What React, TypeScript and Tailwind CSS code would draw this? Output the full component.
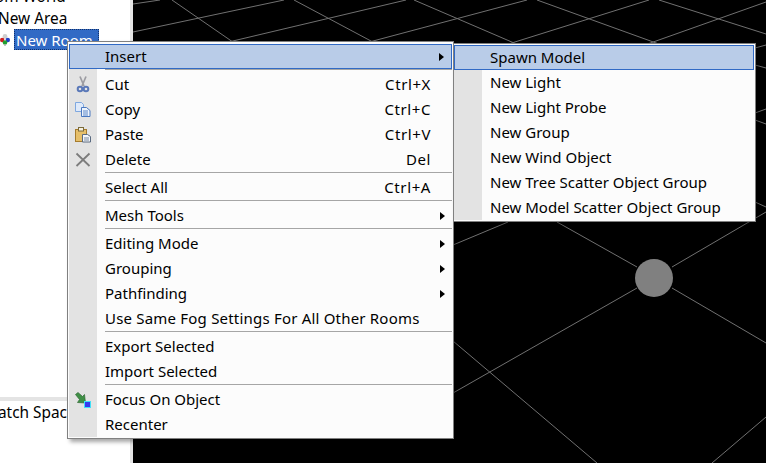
import type { ReactNode } from 'react'

const FONT = 'font-["Noto_Sans",sans-serif]'

type Row = { label: string; key?: string; arrow?: boolean; icon?: ReactNode; hot?: boolean; wide?: boolean } | 'sep'

function CutIcon() {
  return (
    <svg width="16" height="17" viewBox="0 0 16 17">
      <path d="M5 0.5 L9 10 M11 0.5 L7 10" stroke="#9c9ca2" strokeWidth="1.7" fill="none" />
      <circle cx="5" cy="13" r="2.3" fill="none" stroke="#5a78b8" strokeWidth="2" />
      <circle cx="11" cy="13" r="2.3" fill="none" stroke="#5a78b8" strokeWidth="2" />
    </svg>
  )
}

function CopyIcon() {
  return (
    <svg width="16" height="16" viewBox="0 0 16 16">
      <path d="M0.5 0.5h6l2 2v7h-8z" fill="#dfeafa" stroke="#7fa8e0" />
      <path d="M6.5 5.5h5l3.5 3v6h-8.5z" fill="#eef4fc" stroke="#4a78c0" />
      <path d="M8 9h5M8 11h5M8 13h5" stroke="#5a86c8" />
    </svg>
  )
}

function PasteIcon() {
  return (
    <svg width="16" height="16" viewBox="0 0 16 16">
      <rect x="0.5" y="2.5" width="11" height="12" fill="#e6bf6a" stroke="#a67c2e" />
      <rect x="3.5" y="0.5" width="5" height="3.5" fill="#f4efe0" stroke="#7a6a3a" />
      <path d="M7.5 7.5h5l3 2v5.5h-8z" fill="#f4f6fa" stroke="#5a6a80" />
      <path d="M9 11h5M9 13h5" stroke="#7a8aa0" />
    </svg>
  )
}

function DeleteIcon() {
  return (
    <svg width="16" height="16" viewBox="0 0 16 16">
      <path d="M1.5 1.5 L14.5 14 M14.5 1.5 L1.5 14" stroke="#7c7c7c" strokeWidth="1.8" fill="none" />
    </svg>
  )
}

function FocusIcon() {
  return (
    <svg width="16" height="16" viewBox="0 0 16 16">
      <path d="M0.5 2.5 L3 0.5 L7.5 4.5 L9.5 2.5 L10.5 11 L2.5 10.5 L4.5 7.5 Z" fill="#3f8f46" stroke="#2f6a34" strokeWidth="0.7" />
      <rect x="9.5" y="9.5" width="6" height="6" fill="#3838f0" stroke="#40e0f8" />
    </svg>
  )
}

function RoomIcon() {
  return (
    <svg width="10" height="12" viewBox="0 0 10 12">
      <circle cx="5" cy="2.5" r="2.4" fill="#cfcfcf" />
      <circle cx="2.2" cy="6" r="2.2" fill="#d02020" />
      <circle cx="7.8" cy="6" r="2.2" fill="#2040c8" />
      <circle cx="5" cy="8.5" r="2.3" fill="#20a030" />
      <circle cx="5" cy="11" r="1" fill="#b0b0b0" />
    </svg>
  )
}

const mainRows: Row[] = [
  { label: 'Insert', arrow: true, hot: true },
  'sep',
  { label: 'Cut', key: 'Ctrl+X', icon: <CutIcon /> },
  { label: 'Copy', key: 'Ctrl+C', icon: <CopyIcon /> },
  { label: 'Paste', key: 'Ctrl+V', icon: <PasteIcon /> },
  { label: 'Delete', key: 'Del', icon: <DeleteIcon /> },
  'sep',
  { label: 'Select All', key: 'Ctrl+A' },
  'sep',
  { label: 'Mesh Tools', arrow: true },
  'sep',
  { label: 'Editing Mode', arrow: true },
  { label: 'Grouping', arrow: true },
  { label: 'Pathfinding', arrow: true },
  { label: 'Use Same Fog Settings For All Other Rooms', wide: true },
  'sep',
  { label: 'Export Selected' },
  { label: 'Import Selected' },
  'sep',
  { label: 'Focus On Object', icon: <FocusIcon /> },
  { label: 'Recenter' },
]

const subRows: Row[] = [
  { label: 'Spawn Model', hot: true },
  { label: 'New Light' },
  { label: 'New Light Probe' },
  { label: 'New Group' },
  { label: 'New Wind Object' },
  { label: 'New Tree Scatter Object Group' },
  { label: 'New Model Scatter Object Group' },
]

function MenuRows({ rows }: { rows: Row[] }) {
  return (
    <>
      {rows.map((row, i) =>
        row === 'sep' ? (
          <div key={i} className="flex h-[3px]">
            <div className="w-[28px] bg-[#e3e3e3]" />
            <div className="flex-1 pl-[8px]">
              <div className="h-px bg-[#a6a6a6]" />
            </div>
          </div>
        ) : (
          <div
            key={i}
            className={`flex h-[25px] items-center ${row.hot ? 'border border-[#316ac5] bg-[#b9cce8]' : ''}`}
          >
            <div
              className={`flex h-full w-[28px] shrink-0 items-center justify-center ${row.hot ? '-ml-px' : 'bg-[#e3e3e3]'}`}
            >
              {row.icon}
            </div>
            <span className={`-mt-[2px] ml-[8px] whitespace-nowrap ${row.wide ? 'tracking-[0.2px]' : ''}`}>{row.label}</span>
            <span className="-mt-[2px] ml-auto tracking-[0.6px]">{row.key}</span>
            <div className="flex w-[21px] shrink-0 justify-center">
              {row.arrow && <div className="ml-[2px] h-0 w-0 border-y-[4px] border-l-[5px] border-y-transparent border-l-black" />}
            </div>
          </div>
        ),
      )}
    </>
  )
}

export default function App() {
  return (
    <div className={`relative flex h-[463px] w-[766px] overflow-hidden bg-white text-[15px] leading-[22px] text-black ${FONT}`}>
      {/* Left tree + lower panel */}
      <div className="flex w-[130px] shrink-0 flex-col">
        <div className="h-[397px] overflow-hidden">
          <div className="-ml-[18px] -mt-[15px] whitespace-nowrap">
            <div className="-ml-[6px] h-[22px] text-[15.4px] leading-[24px]">Room World</div>
            <div className="h-[22px] pl-[16px] text-[15.4px] leading-[24px]">New Area</div>
            <div className="flex h-[21px] items-center">
              <div className="ml-[18px] mt-[1px]"><RoomIcon /></div>
              <div className="ml-[4px] h-[21px] w-[85px] border border-dotted border-[#10306a] bg-[#316ac5] pl-[1px] leading-[20px] text-white">New Room</div>
            </div>
          </div>
        </div>
        <div className="h-[4px] bg-[#e4e4e4]" />
        <div className="overflow-hidden">
          <div className="-ml-[16px] pt-px text-[15.4px] whitespace-nowrap">Match Space</div>
        </div>
      </div>
      <div className="w-[3px] shrink-0 bg-[#e4e4e4]" />

      {/* 3D viewport */}
      <div className="flex-1 bg-black">
        <svg width="633" height="463" viewBox="133 0 633 463" className="block">
          <g stroke="#707070" strokeWidth="1" fill="none">
            <path d="M133 4 L160 0" />
            <path d="M133 32 L284 0" />
            <path d="M199 49 L406 0" />
            <path d="M343 49 L527 0" />
            <path d="M483 52 L649 0" />
            <path d="M625 52 L766 2" />
            <path d="M172 0 L243 49" />
            <path d="M294 0 L386 49" />
            <path d="M414 0 L535 52" />
            <path d="M537 0 L681 52" />
            <path d="M659 0 L766 34" />
            <path d="M755 48 L766 45" />
            <path d="M755 65 L766 68" />
            <path d="M755 113 L766 109" />
            <path d="M755 120 L766 124" />
            <path d="M755 202 L766 207" />
            <path d="M453 245 L508 222" />
            <path d="M557 222 L637 267" />
            <path d="M672 267 L766 212" />
            <path d="M637 288 L453 393" />
            <path d="M672 288 L766 343" />
            <path d="M453 341 L597 463" />
            <path d="M766 417 L712 463" />
          </g>
          <circle cx="654" cy="278" r="19" fill="#808080" />
        </svg>
      </div>

      {/* Context menu */}
      <div className="absolute left-[67px] top-[41px] w-[387px] border border-[#808080] bg-[#fcfcfc] p-[1px] pt-[2px] shadow-[3px_3px_4px_rgba(0,0,0,0.35)]">
        <MenuRows rows={mainRows} />
      </div>

      {/* Insert submenu */}
      <div className="absolute left-[453px] top-[43px] w-[303px] border border-[#808080] bg-[#fcfcfc] py-[1px] pr-[1px] shadow-[3px_3px_4px_rgba(0,0,0,0.35)]">
        <MenuRows rows={subRows} />
      </div>
    </div>
  )
}
